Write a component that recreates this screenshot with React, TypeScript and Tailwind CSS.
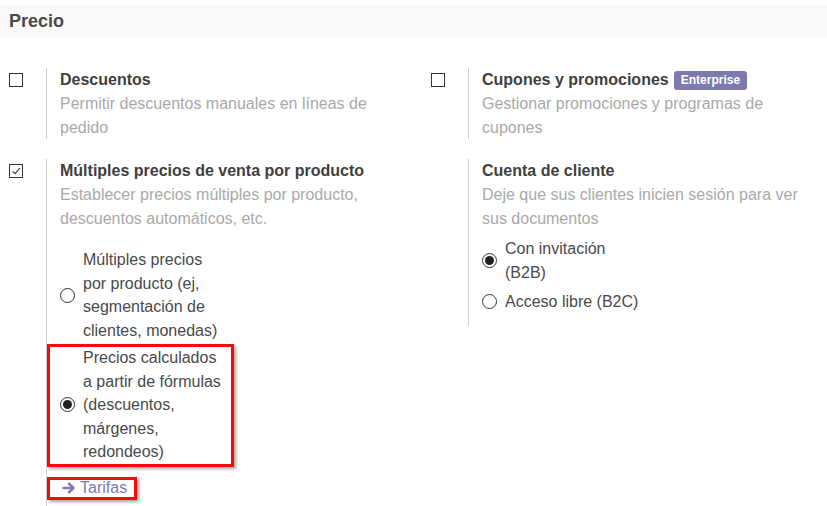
import React from "react";

function Checkbox({ checked }: { checked?: boolean }) {
  return (
    <div className="w-[14px] h-[14px] border border-[#333] bg-white flex items-center justify-center">
      {checked && (
        <svg width="10" height="10" viewBox="0 0 10 10" fill="none">
          <path d="M1.5 5.2 L4 7.6 L8.8 2.2" stroke="#333" strokeWidth="1.1" />
        </svg>
      )}
    </div>
  );
}

function Radio({ checked }: { checked?: boolean }) {
  return (
    <div className="w-[15px] h-[15px] shrink-0 rounded-full border-[1.5px] border-[#333] bg-white flex items-center justify-center mr-[8px]">
      {checked && <div className="w-[9px] h-[9px] rounded-full bg-[#222]" />}
    </div>
  );
}

function RadioItem({ checked, children }: { checked?: boolean; children: React.ReactNode }) {
  return (
    <div className="flex items-center">
      <Radio checked={checked} />
      <div className="w-[142px] leading-[23.5px] text-[#4a4a4a]">{children}</div>
    </div>
  );
}

function Setting({
  checked,
  noCheckbox,
  title,
  badge,
  desc,
  children,
  pb,
}: {
  checked?: boolean;
  noCheckbox?: boolean;
  title: string;
  badge?: string;
  desc: string;
  children?: React.ReactNode;
  pb?: string;
}) {
  return (
    <div className="flex">
      <div className="w-[46px] pl-[9px] pt-[5px] shrink-0">
        {!noCheckbox && <Checkbox checked={checked} />}
      </div>
      <div className={"border-l border-[#cfcfcf] pl-[13px] " + (pb ?? "")}>
        <div className="w-[345px]">
          <div className="flex items-center h-[24px]">
            <span className="font-bold text-[#3f3f3f]">{title}</span>
            {badge && (
              <span className="ml-[5px] h-[19px] px-[7px] rounded-[3px] bg-[#7c7bad] text-white text-[12px] font-bold flex items-center">
                {badge}
              </span>
            )}
          </div>
          <div className="text-[#a9a9a9] leading-[23.5px]">{desc}</div>
          {children}
        </div>
      </div>
    </div>
  );
}

export default function App() {
  return (
    <div className="w-[827px] h-[506px] overflow-hidden bg-white font-['Liberation_Sans',Arial,sans-serif] text-[16px]">
      <div className="mt-[5px] h-[32px] bg-[#f9f9f9] pl-[9px] flex items-center text-[18px] font-bold text-[#4a4a4a]">
        Precio
      </div>
      <div className="grid grid-cols-[422px_405px] items-start mt-[31px] gap-y-[20px]">
        <Setting title="Descuentos" desc="Permitir descuentos manuales en líneas de pedido" />
        <Setting
          title="Cupones y promociones"
          badge="Enterprise"
          desc="Gestionar promociones y programas de cupones"
        />
        <Setting
          checked
          title="Múltiples precios de venta por producto"
          desc="Establecer precios múltiples por producto, descuentos automáticos, etc."
          pb="pb-[20px]"
        >
          <div className="mt-[18px] flex flex-col gap-[4px]">
            <RadioItem>Múltiples precios por producto (ej, segmentación de clientes, monedas)</RadioItem>
            <div className="relative">
              <RadioItem checked>
                Precios calculados a partir de fórmulas (descuentos, márgenes, redondeos)
              </RadioItem>
              <div className="absolute left-[-13px] top-[-2px] bottom-[-3px] w-[187px] border-[3px] border-[#f20c0c] shadow-[2px_2px_3px_rgba(0,0,0,0.35)]" />
            </div>
          </div>
          <div className="mt-[13px] relative">
            <div className="flex items-center h-[23px] pl-[2px] text-[#7c7bad]">
              <svg width="14" height="14" viewBox="0 0 14 14" className="mr-[4px]">
                <path
                  d="M1.5 7 H11 M7 2.6 L11.4 7 L7 11.4"
                  fill="none"
                  stroke="#7c7bad"
                  strokeWidth="2.6"
                  strokeLinecap="round"
                  strokeLinejoin="round"
                />
              </svg>
              <span>Tarifas</span>
            </div>
            <div className="absolute left-[-13px] w-[90px] top-0 bottom-0 border-[3px] border-[#f20c0c] shadow-[2px_2px_3px_rgba(0,0,0,0.35)]" />
          </div>
        </Setting>
        <Setting
          noCheckbox
          title="Cuenta de cliente"
          desc="Deje que sus clientes inicien sesión para ver sus documentos"
          pb="pb-[12px]"
        >
          <div className="mt-[7px] flex flex-col gap-[6px]">
            <RadioItem checked>Con invitación (B2B)</RadioItem>
            <RadioItem>Acceso libre (B2C)</RadioItem>
          </div>
        </Setting>
      </div>
    </div>
  );
}
